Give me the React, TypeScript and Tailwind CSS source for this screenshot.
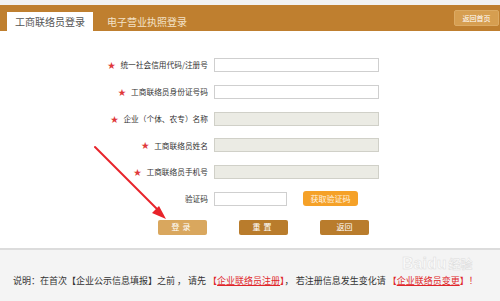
import React from "react";

const font = { fontFamily: '"Noto Sans CJK SC", "Noto Sans", sans-serif' };

type Row = { label: string; star: boolean; disabled?: boolean };

const rows: Row[] = [
  { label: "统一社会信用代码/注册号", star: true },
  { label: "工商联络员身份证号码", star: true },
  { label: "企业（个体、农专）名称", star: true, disabled: true },
  { label: "工商联络员姓名", star: true, disabled: true },
  { label: "工商联络员手机号", star: true, disabled: true },
];

const App = () => {
  return (
    <div className="relative w-[500px] h-[301px] overflow-hidden bg-white" style={font}>
      <div className="h-[5px] bg-[#f2f2f2]" />

      {/* header bar */}
      <div className="relative flex items-end h-[26px] bg-[#bf7f2f]">
        <div className="ml-[7px] w-[86px] h-[19px] bg-white flex items-center justify-center text-[10px] text-[#555] leading-none">
          工商联络员登录
        </div>
        <div className="ml-[14px] h-[19px] flex items-center text-[10px] text-[#f3e2c8] leading-none">
          电子营业执照登录
        </div>
        <div className="absolute right-[1px] top-[5px] w-[45px] h-[16px] rounded-[2px] bg-[#d69e50] border border-[#dcaa63] flex items-center justify-center text-[7px] text-white leading-none">
          返回首页
        </div>
      </div>

      {/* form */}
      <div className="flex flex-col pt-[27px] gap-y-[12.8px]">
        {rows.map((r) => (
          <div key={r.label} className="flex items-center h-[14px]">
            <div className="w-[214px] pr-[6px] flex justify-end items-center text-[7.7px] text-[#333] leading-none">
              {r.star && <span className="text-[#e0393a] text-[8px] mr-[5px]">★</span>}
              <span>{r.label}</span>
            </div>
            <div
              className={
                r.disabled
                  ? "w-[165px] h-[14px] border border-[#d0d0c8] bg-[#ebebe4]"
                  : "w-[165px] h-[14px] border border-[#cfcfcf] bg-white"
              }
            />
          </div>
        ))}
        <div className="flex items-center h-[14px]">
          <div className="w-[214px] pr-[6px] text-right text-[7.7px] text-[#333] leading-none">验证码</div>
          <div className="w-[73px] h-[14px] border border-[#cfcfcf] bg-white" />
          <div className="ml-[16px] w-[55px] h-[15px] rounded-[3px] bg-[#f5a128] flex items-center justify-center text-[8px] text-[#fff4e0] leading-none">
            获取验证码
          </div>
        </div>
      </div>

      {/* buttons */}
      <div className="flex mt-[14px] ml-[158px] gap-[32px]">
        <div className="w-[49px] h-[15px] rounded-[2px] bg-[#d9a75e] flex items-center justify-center text-[8px] text-white leading-none tracking-[3px]">
          登录
        </div>
        <div className="w-[49px] h-[15px] rounded-[2px] bg-[#b97c2c] flex items-center justify-center text-[8px] text-white leading-none tracking-[3px]">
          重置
        </div>
        <div className="w-[49px] h-[15px] rounded-[2px] bg-[#b97c2c] flex items-center justify-center text-[8px] text-white leading-none">
          返回
        </div>
      </div>

      {/* footer */}
      <div className="absolute left-0 right-0 top-[248px] bottom-0 bg-[#f4f4f4] border-t-2 border-[#dcdcdc]">
        <div className="pl-[13px] pt-[26px] text-[9px] text-[#333] leading-none whitespace-nowrap">
          说明：在首次【企业公示信息填报】之前 ， 请先
          <span className="text-[#e0262a]"> 【<span className="underline">企业联络员注册</span>】</span>
          ， 若注册信息发生变化请
          <span className="text-[#e0262a]"> 【<span className="underline">企业联络员变更</span>】！</span>
        </div>
        <div
          className="absolute left-[402px] top-[6px] text-[16px] font-bold text-[#fafafa] leading-none"
          style={{ fontFamily: '"Liberation Sans", sans-serif', WebkitTextStroke: "0.5px #dddddd" }}
        >
          Bai<span>du</span>
          <span className="text-[12px] ml-[2px]" style={font}>经验</span>
        </div>
      </div>

      {/* red arrow */}
      <svg className="absolute left-0 top-0" width="500" height="301" viewBox="0 0 500 301">
        <line x1="95" y1="147" x2="160" y2="212" stroke="#e8232a" strokeWidth="2" strokeLinecap="round" />
        <polygon points="166,219 152,213 159,206" fill="#e8232a" />
      </svg>
    </div>
  );
};

export default App;
